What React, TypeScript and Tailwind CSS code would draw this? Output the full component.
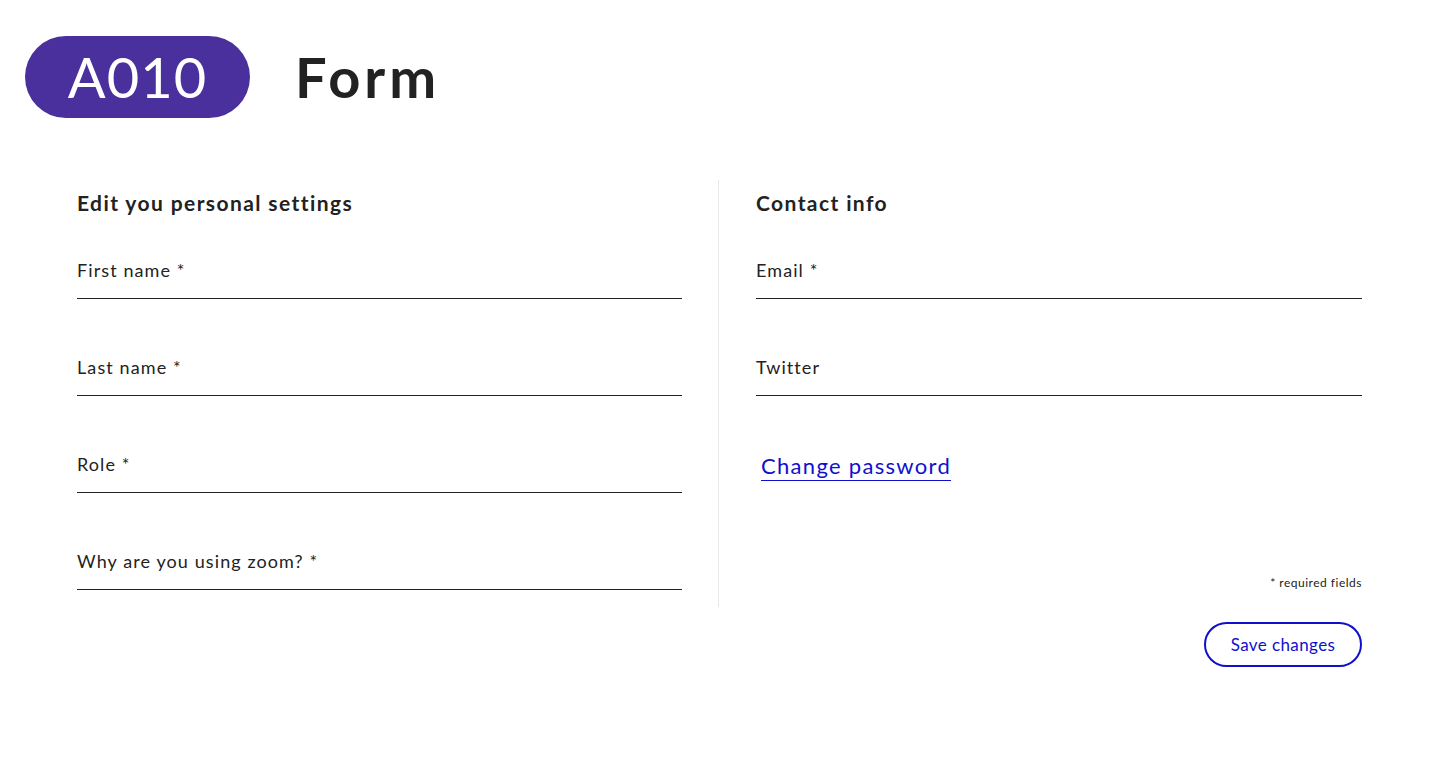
import React from 'react';

const fields = ['First name *', 'Last name *', 'Role *', 'Why are you using zoom? *'];
const contactFields = ['Email *', 'Twitter'];

const Field: React.FC<{ label: string }> = ({ label }) => (
  <div>
    <label className="block text-[18px] leading-[24px] tracking-[1.1px] text-[#222]">{label}</label>
    <div className="h-[17px] border-b border-[#222]" />
  </div>
);

const App: React.FC = () => {
  return (
    <div
      className="w-[1438px] h-[772px] bg-white text-[#222]"
      style={{ fontFamily: 'Lato, "Open Sans", sans-serif' }}
    >
      <header className="flex items-center pt-[36px] pl-[25px]">
        <div className="w-[225px] h-[82px] rounded-full bg-[#4a309c] flex items-center justify-center">
          <span className="text-white text-[56px] leading-none tracking-[1px]">A010</span>
        </div>
        <h1 className="ml-[45px] text-[56px] font-bold leading-none tracking-[4px] text-[#222]">Form</h1>
      </header>

      <main className="flex ml-[77px] mt-[62px]">
        <section className="w-[605px] pt-[9px]">
          <h2 className="text-[21px] leading-[28px] font-bold tracking-[1.4px]">Edit you personal settings</h2>
          <div className="flex flex-col gap-[56px] mt-[41px]">
            {fields.map(f => (
              <Field key={f} label={f} />
            ))}
          </div>
        </section>

        <div className="ml-[36px] w-px bg-[#e8e8e8] h-[427px]" />

        <section className="ml-[37px] w-[606px] pt-[9px] flex flex-col">
          <h2 className="text-[21px] leading-[28px] font-bold tracking-[1.4px]">Contact info</h2>
          <div className="flex flex-col gap-[56px] mt-[41px]">
            {contactFields.map(f => (
              <Field key={f} label={f} />
            ))}
          </div>
          <div className="mt-[56px] pl-[5px]">
            <a
              href="#"
              className="inline-block text-[22px] leading-[28px] tracking-[1.3px] text-[#1010cc] border-b border-[#1010cc]"
            >
              Change password
            </a>
          </div>
          <p className="mt-auto mb-[16px] text-right text-[12px] leading-[16px] tracking-[0.5px] text-[#222]">
            * required fields
          </p>
        </section>
      </main>

      <div className="flex justify-end w-[1362px] mt-[15px]">
        <button className="w-[158px] h-[45px] rounded-full border-2 border-[#1010cc] text-[#1010cc] text-[17px] tracking-[0.4px] bg-white">
          Save changes
        </button>
      </div>
    </div>
  );
};

export default App;
